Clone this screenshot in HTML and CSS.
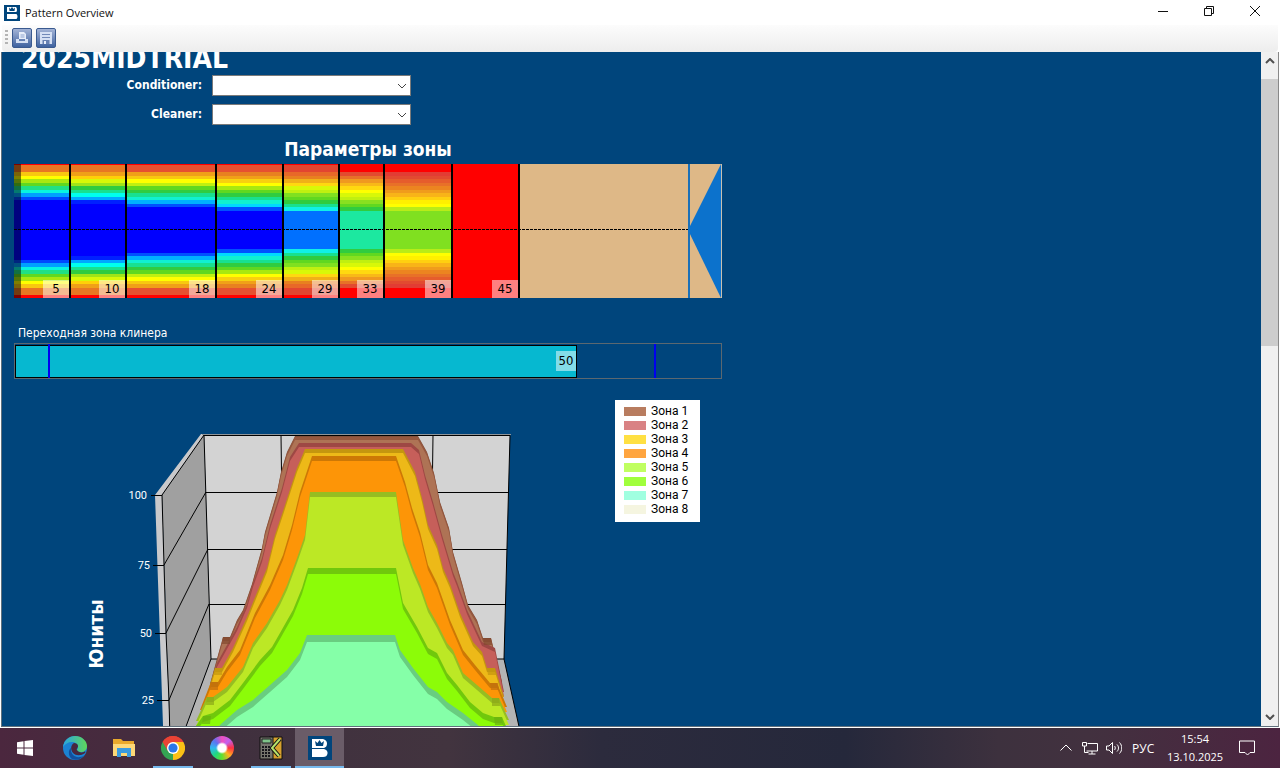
FILE: index.html
```
<!DOCTYPE html>
<html lang="ru">
<head>
    <meta charset="UTF-8">
    <title>Pattern Overview</title>
    <link rel="stylesheet" href="styles.css">
</head>
<body>
    <div class="window">
        <header class="titlebar">
            <svg class="app-icon" viewBox="0 0 16 16"><rect width="16" height="16" fill="#00457c"/><path d="M3 2h9q1 1 1 3t-1 2H3zM3 9h9.500q1 1 1 2.500t-1 2.500H3z" fill="#fff"/><path d="M5 2.500l1.500 1.500L8 2l1.500 2L11 2.500 10.500 6h-5z" fill="#00457c"/></svg>
            <span class="title">Pattern Overview</span>
            <button class="win-btn" aria-label="Minimize"><svg viewBox="0 0 12 12"><path d="M1 6.500h10"/></svg></button>
            <button class="win-btn" aria-label="Restore"><svg viewBox="0 0 12 12"><path d="M1.500 3.500h7v7h-7zM3.500 3.500v-2h7v7h-2"/></svg></button>
            <button class="win-btn" aria-label="Close"><svg viewBox="0 0 12 12"><path d="M1 1l10 10M11 1L1 11"/></svg></button>
        </header>
        <div class="toolbar">
            <span class="grip"></span>
            <button class="tool" aria-label="Print"><svg viewBox="0 0 16 16"><path d="M5 2h5l2 2v5H5z" fill="#e8eefa"/><path d="M6.500 5h4M6.500 7h4" stroke="#8fa5cf"/><path d="M2 9h3v2h6V9h3v4H2z" fill="#d5e0f4"/></svg></button>
            <button class="tool" aria-label="Save"><svg viewBox="0 0 16 16"><path d="M2 2h12v12H2z" fill="#d5e0f4"/><path d="M4 4.500h8M4 7.500h8" stroke="#7189b8"/><path d="M4.500 10h7v4h-7z" fill="#6680b2"/><path d="M6 11h2v3H6z" fill="#e8eefa"/></svg></button>
        </div>

        <div class="body">
            <main class="content">
                <h1>2025MIDTRIAL</h1>
                <form class="params">
                    <label for="conditioner">Conditioner:</label>
                    <div class="combo">
                        <select id="conditioner"><option></option></select>
                        <svg viewBox="0 0 10 6"><path d="M1 1l4 4 4-4"/></svg>
                    </div>
                    <label for="cleaner">Cleaner:</label>
                    <div class="combo">
                        <select id="cleaner"><option></option></select>
                        <svg viewBox="0 0 10 6"><path d="M1 1l4 4 4-4"/></svg>
                    </div>
                </form>

                <section class="lane-panel">
                    <h2>Параметры зоны</h2>
                    <div class="lane" id="lane">
                        <div class="lane-end">
                            <svg viewBox="0 0 34 134" preserveAspectRatio="none"><path d="M0 0h2v134H0z" fill="#1a70b8"/><path d="M0 66L33 0v134z" fill="#0c72cc"/><path d="M33 0h1v134h-1z" fill="#c8c0b0"/></svg>
                        </div>
                        <div class="foul"></div>
                        <div class="center-line"></div>
                    </div>

                    <p class="caption">Переходная зона клинера</p>
                    <div class="track">
                        <div class="track-fill"><span>50</span></div>
                        <i class="mark mark-start"></i>
                        <i class="mark mark-end"></i>
                    </div>
                </section>

                <section class="chart">
                    <svg class="plot" viewBox="14 400 540 340">
                        <!-- walls and floor -->
                        <path d="M155 495L201 434H205L162 495L170 740H163.500Z" fill="#c9c9cb"/>
                        <path d="M211 659L181 740H522L504 659Z" fill="#b4b4b4"/>
                        <path d="M162 495L204 435L211 659L181 740H170Z" fill="#a0a0a0"/>
                        <path d="M204 435H510L504 659H211Z" fill="#d3d3d3"/>
                        <path d="M202 434.500H511" stroke="#8f9498"/>
                        <g class="axis">
                            <path d="M162 495L204 435L211 659L181 740M162 495L164 565L166 633L169 700L170 740"/>
                            <path d="M164 565L206 492M166 633L208 549M169 700L209 604"/>
                            <path d="M204 435.500H510L504 659H211M206 492.500H508M208 549.500H507M209 604.500H506"/>
                            <path d="M281 435L284 659M357.500 435V659M433 435L430 659M504 659L522 740"/>
                            <path d="M151 495.500H162M153 565.500H164M155 633.500H166M157 700.500H169"/>
                        </g>
                        <!-- one ribbon per zone, back to front -->
                        <defs>
                            <path id="z1" d="M210 684L223 637H230L237 620L243 610L252 584L262 548L265 532L277 492L281 472L287 452L295 436H418L427 452L434 473L440 502L449 528L453 552L462 583L468 605L477 620L483 638H491L502 682Z"/>
                            <path id="z2" d="M212 682L217 663L227 645L237 627L247 604L253 583L262 558L270 525L282 488L290 457L299 443H411L419 450L425 475L433 502L442 535L453 572L457 582L467 610L482 642L495 648L504 692Z"/>
                            <path id="z3" d="M206 698L215 668H222L233 648L247 617L260 585L267 568L275 535L284 508L297 468L305 449H403L415 472L422 498L428 525L437 545L443 568L450 584L460 613L473 642L482 652L487 668H495L504 697Z"/>
                            <path id="z4" d="M200 710L211 682H218L227 667L240 650L255 613L270 585L283 555L292 525L300 492L312 456H396L405 482L412 508L420 532L428 565L437 583L443 600L450 620L463 650L475 665L490 683H497L507 707Z"/>
                            <path id="z5" d="M196 721L207 697H213L227 687L243 667L253 643L267 623L280 600L287 585L297 558L305 535L310 492H396L403 540L413 568L420 584L428 607L437 623L447 643L453 650L463 673L477 685L492 698H499L509 720Z"/>
                            <path id="z6" d="M186 740L203 716L213 713L230 700L243 683L260 660L272 647L280 633L293 610L302 588L308 568H396L403 603L417 627L428 648L437 653L447 673L457 685L470 702L483 713L494 717H502L512 740Z"/>
                            <path id="z7" d="M206 740L221 724L237 710L253 700L270 685L287 670L300 653L307 635H395L400 650L413 668L428 687L437 692L447 702L463 713L478 725L488 740Z"/>
                        </defs>
                        <use href="#z1" fill="#85503a"/><use href="#z1" y="1" fill="#96583f"/><use href="#z1" y="4" fill="#ae7355"/>
                        <use href="#z2" fill="#9e4844"/><use href="#z2" y="4" fill="#c65f5a"/>
                        <use href="#z3" fill="#c4960f"/><use href="#z3" y="4" fill="#edb918"/>
                        <use href="#z4" fill="#cd7805"/><use href="#z4" y="5" fill="#fd9507"/>
                        <use href="#z5" fill="#96bd22"/><use href="#z5" y="5" fill="#bce825"/>
                        <use href="#z6" fill="#70c80c"/><use href="#z6" y="6" fill="#8cfc08"/>
                        <use href="#z7" fill="#69cd80"/><use href="#z7" y="7" fill="#85ffa8"/>
                        <g class="feet">
                            <path d="M223 637h7v7h-8zM483 638h8l1 7h-8z" fill="#83492f"/>
                            <path d="M215 668h7v7h-8zM487 668h8l1 7h-8z" fill="#c4960f"/>
                            <path d="M211 682h7v8h-8zM490 683h8l1 7h-8z" fill="#c07010"/>
                            <path d="M207 697h7v8h-8zM492 698h7l1 8h-8z" fill="#8da818"/>
                            <path d="M203 716h8l-1 8h-8zM494 717h8l1 8h-8z" fill="#6ab010"/>
                        </g>
                        <g class="ticks">
                            <text x="147" y="499">100</text>
                            <text x="150" y="569">75</text>
                            <text x="152" y="637">50</text>
                            <text x="154" y="704">25</text>
                        </g>
                        <text class="axis-title" transform="translate(103 634) rotate(-90)">Юниты</text>
                    </svg>
                    <ul class="legend">
                        <li><i class="z1"></i>Зона 1</li>
                        <li><i class="z2"></i>Зона 2</li>
                        <li><i class="z3"></i>Зона 3</li>
                        <li><i class="z4"></i>Зона 4</li>
                        <li><i class="z5"></i>Зона 5</li>
                        <li><i class="z6"></i>Зона 6</li>
                        <li><i class="z7"></i>Зона 7</li>
                        <li><i class="z8"></i>Зона 8</li>
                    </ul>
                </section>
            </main>
            <div class="scrollbar">
                <svg viewBox="0 0 10 6"><path d="M1 5l4-4 4 4"/></svg>
                <div class="rail"><div class="thumb"></div></div>
                <svg viewBox="0 0 10 6"><path d="M1 1l4 4 4-4"/></svg>
            </div>
        </div>
    </div>

    <footer class="taskbar">
        <button class="task start" aria-label="Start"><svg viewBox="0 0 24 24"><path d="M4 6.200l6.500-1v6.300H4zM11.500 5L20 4v7.500h-8.500zM4 12.500h6.500v6.300L4 17.800zM11.500 12.500H20V20l-8.500-1z" fill="#fff"/></svg></button>
        <button class="task" aria-label="Edge">
            <svg viewBox="0 0 24 24">
                <defs>
                    <linearGradient id="edgeTop"><stop offset="0" stop-color="#2aa5e0"/><stop offset="1" stop-color="#5fd65a"/></linearGradient>
                </defs>
                <circle cx="12" cy="12" r="12" fill="#1b82d2"/>
                <path d="M0 11C1 4 6 0 12 0c7 0 12 5 12 10 0 4-3 6-6 6-3 0-4-1-4-2 0-1 1-1 1-3 0-3-3-5-6-5-4 0-7 2-9 5z" fill="url(#edgeTop)"/>
                <path d="M8 12c-1 6 4 10 9 9 2 0 4-1 5-3-3 5-8 7-13 5-4-3-4-9-1-11z" fill="#124f9c"/>
                <path d="M14 14c-1-1 1-2 1-4 0-2-2-3-4-3-3 2-4 6-1 10 3 3 8 3 12 0 1-1 0-2-1-1-3 1-6 0-7-2z" fill="#48273e"/>
            </svg>
        </button>
        <button class="task" aria-label="Explorer"><svg viewBox="0 0 24 24"><path d="M1 3h8l2 2h11v14H1z" fill="#e9a92c"/><path d="M1 8h22v12H1z" fill="#fdd878"/><path d="M5 12h14v9h-4v-4H9v4H5z" fill="#3a9be0"/></svg></button>
        <button class="task running" aria-label="Chrome">
            <svg viewBox="0 0 24 24">
                <path d="M12 12L1.600 6A12 12 0 0 1 22.400 6z" fill="#e94335"/>
                <path d="M12 12L22.400 6A12 12 0 0 1 12 24z" fill="#fbc116"/>
                <path d="M12 12V24A12 12 0 0 1 1.600 6z" fill="#34a353"/>
                <path d="M12 6h10.400l-5 9-5.400 9 5-9z" fill="#fbc116"/>
                <path d="M12 6h10.400A12 12 0 0 0 1.600 6l5.200 9z" fill="#e94335"/>
                <circle cx="12" cy="12" r="6" fill="#fff"/><circle cx="12" cy="12" r="4.600" fill="#2a77e8"/>
            </svg>
        </button>
        <button class="task" aria-label="Photos"><span class="ring"></span></button>
        <button class="task running" aria-label="Calculator">
            <svg viewBox="0 0 24 24">
                <path d="M10 1h13v22H10z" fill="#d8a12e" stroke="#111"/>
                <path d="M1 1h13v22H1z" fill="#76766e" stroke="#111"/>
                <path d="M3 3h9v4H3z" fill="#7fc48a" stroke="#222"/>
                <path d="M3 11h9M3 14h9M3 17h9M3 20h9" stroke="#15151a" stroke-width="2" stroke-dasharray="2 1"/>
                <path d="M21 3l-8 9 7 8" fill="none" stroke="#111" stroke-width="4"/>
                <path d="M21 3l-8 9 7 8" fill="none" stroke="#b7e36c" stroke-width="2"/>
            </svg>
        </button>
        <button class="task active" aria-label="Pattern Overview"><svg viewBox="0 0 24 24"><path d="M0 0h24v24H0z" fill="#00457c"/><path d="M4 3h11q4 1 4 4.500T16 12H4zM4 13h12q4 1 3.500 4.500T15 21H4z" fill="#fff"/><path d="M7 5l2.500 2L11.500 4l2 3L16 5l-1 5H8z" fill="#00457c"/></svg></button>

        <div class="tray">
            <svg viewBox="0 0 16 16"><path d="M2.500 10.500L8 5l5.500 5.500"/></svg>
            <svg viewBox="0 0 16 16"><path d="M5.500 3.500h10v7.500H4.500M10 11v3M6.500 14h7M.5 2.500h4v3.500h-4zM2.500 6v6.500h4"/></svg>
            <svg viewBox="0 0 16 16"><path d="M.5 6v4h2.500l3.500 3.500v-11L3 6zM8.500 6c1 1 1 3 0 4M11 4.500c2 2 2 5 0 7M13.500 2.500c3 3 3 8 0 11"/></svg>
            <span class="lang">РУС</span>
            <div class="clock"><time>15:54</time><time>13.10.2025</time></div>
            <button class="notify" aria-label="Notifications"><svg viewBox="0 0 16 16"><path d="M.5 1h15v11.500H11l-2.500 2.500L6 12.500H.5z"/></svg></button>
        </div>
    </footer>

    <script src="lane.js"></script>
</body>
</html>
```

FILE: lane.js
```
// distance from the top of the lane where each oil stripe begins
const steps = [1, 8, 12, 15, 19, 22, 26, 29, 33, 36, 40, 43, 47];
const RED = '#ff0000';

const zones = [
    { end: 5, colors: ['#e87722', '#f8c810', '#ffff00', '#a8e810', '#60d820', '#20e085', '#08f4e0', '#00a0ff', '#0048ff', '#0000ff'] },
    { end: 10, colors: ['#e87722', '#f0a018', '#ffd008', '#d8f808', '#a0e418', '#30cc40', '#18e090', '#00ffee', '#00a8ff', '#0020ff', '#0000ff'] },
    { end: 18, colors: ['#e65030', '#f0a018', '#f8c810', '#ffff00', '#c0f010', '#60d820', '#30cc40', '#18e090', '#10f0d0', '#00b0ff', '#0050ff', '#0000ff'] },
    { end: 24, colors: ['#e65030', '#e88020', '#f0a018', '#f8d010', '#ffff00', '#a8e810', '#60d820', '#30cc40', '#18e090', '#10f0d0', '#00d8ff', '#0050ff', '#0000ff'] },
    { end: 29, colors: ['#e24530', '#e86828', '#e88020', '#f0b018', '#ffd810', '#d8f808', '#c0f010', '#80e020', '#60d820', '#30cc40', '#18e090', '#10f0e8', '#0070ff'] },
    { end: 33, colors: [RED, '#e24a30', '#e87028', '#f09820', '#f8b818', '#ffd810', '#ffff00', '#d8f808', '#c0f010', '#88e020', '#60d820', '#30cc40', '#1ce8a0'] },
    { end: 39, colors: [RED, '#e23c34', '#e24a30', '#e65c2c', '#e87028', '#ec8420', '#f09c1c', '#f8b418', '#ffd010', '#fff000', '#ffff00', '#b8ec18', '#80e020'] },
    { end: 45, colors: [RED] }
];

function stripes(colors) {
    const stops = [`${RED} 0 1px`];
    const last = colors.length - 1;
    for (let i = 0; i < last; i++) {
        stops.push(`${colors[i]} ${steps[i]}px ${steps[i + 1]}px`);
    }
    stops.push(`${colors[last]} ${steps[last]}px ${132 - steps[last]}px`);
    for (let i = last - 1; i >= 0; i--) {
        stops.push(`${colors[i]} ${132 - steps[i + 1]}px ${132 - steps[i]}px`);
    }
    stops.push(`${RED} 131px`);
    return `linear-gradient(${stops.join(', ')})`;
}

const lane = document.getElementById('lane');
const laneEnd = lane.querySelector('.lane-end');
zones.forEach(zone => {
    const div = document.createElement('div');
    div.className = 'zone';
    div.style.background = stripes(zone.colors);
    const label = document.createElement('span');
    label.textContent = zone.end;
    div.appendChild(label);
    lane.insertBefore(div, laneEnd);
});
```

FILE: styles.css
```
* { box-sizing: border-box; }
body { margin: 0; height: 100vh; display: flex; flex-direction: column; overflow: hidden; background: #fff; font-family: "DejaVu Sans Condensed", "DejaVu Sans", sans-serif; font-size: 12px; }
button { border: none; padding: 0; background: none; }
h1, h2, p, ul { margin: 0; padding: 0; }

.window { flex: 1; min-height: 0; display: flex; flex-direction: column; border-bottom: 1px solid #fff; }
.titlebar { display: flex; align-items: center; height: 25px; padding: 0 2px 0 4px; font-family: "Open Sans", sans-serif; font-size: 11px; }
.app-icon { width: 16px; height: 16px; }
.title { flex: 1; padding-left: 5px; color: #111; }
.win-btn { width: 46px; height: 24px; }
.win-btn svg { width: 12px; height: 12px; fill: none; stroke: #111; }
.toolbar { display: flex; align-items: center; height: 27px; padding: 0 2px 2px 3px; margin: 0 2px; gap: 4px; background: linear-gradient(#fcfcfc, #ededed); border-radius: 0 0 4px 4px; }
.grip { width: 3px; height: 15px; background: repeating-linear-gradient(#b4b4b4 0 2px, transparent 2px 4px); }
.tool { width: 20px; height: 20px; border: 1px solid #3a5a90; border-radius: 2px; background: linear-gradient(#a3b3d6, #3f62a0); }
.tool svg { display: block; width: 16px; height: 16px; margin: 1px; }

.body { flex: 1; min-height: 0; display: flex; margin: 0 1px; border-left: 1px solid #60707c; border-right: 1px solid #888; border-bottom: 1px solid #60707c; background: #00457c; }
.content { flex: 1; min-width: 0; overflow: hidden; padding-left: 12px; color: #fff; }
h1 { margin-top: -8px; padding-left: 7px; font-size: 28px; line-height: 30px; }
.params { display: grid; grid-template-columns: 188px 199px; gap: 7px 10px; align-items: center; font-weight: bold; font-size: 12px; line-height: 21px; }
.params label { padding-top: 1px; text-align: right; }
.combo { position: relative; height: 21px; }
.combo select { appearance: none; display: block; width: 100%; height: 21px; border: 1px solid #7a7a7a; border-radius: 0; background: #fff; }
.combo svg { position: absolute; right: 4px; top: 8px; width: 10px; height: 6px; fill: none; stroke: #444; pointer-events: none; }

.lane-panel { max-width: 708px; }
h2 { margin-top: 12px; font-size: 19px; line-height: 24px; text-align: center; }
.lane { position: relative; display: grid; grid-template-columns: 57fr 56fr 90fr 67fr 56fr 45fr 68fr 67fr 202fr; height: 134px; margin-top: 3px; background: #deb887; }
.zone { display: flex; justify-content: flex-end; align-items: flex-end; border-right: 2px solid #000; }
.zone span { width: 26px; height: 18px; background: rgba(255, 255, 255, 0.5); color: #000; text-align: center; font-size: 13px; line-height: 18px; white-space: nowrap; }
.lane-end { display: flex; justify-content: flex-end; }
.lane-end svg { width: 34px; height: 134px; }
.foul { position: absolute; left: 0; top: 0; width: 7px; height: 100%; background: rgba(0, 0, 0, 0.5); }
.center-line { position: absolute; left: 0; right: 34px; top: 65px; height: 1px; background: repeating-linear-gradient(90deg, #000 0 3px, transparent 3px 4px); }

.caption { margin-top: 26px; padding-left: 4px; font-size: 12px; line-height: 18px; }
.track { position: relative; height: 36px; margin-top: 1px; border: 1px solid #5c6870; }
.track-fill { display: flex; justify-content: flex-end; align-items: flex-start; width: 79.6%; height: 33px; margin-top: 1px; padding-top: 5px; border: 1px solid #000; background: #06b8d0; }
.track-fill span { width: 20px; background: #83dce8; color: #000; text-align: center; font-size: 13px; line-height: 20px; }
.mark { position: absolute; top: 0; bottom: 0; width: 2px; background: #0000f0; }
.mark-start { left: 33px; }
.mark-end { right: 65px; }

.chart { display: flex; align-items: flex-start; gap: 61px; margin-top: 21px; }
.plot { flex: none; width: 540px; height: 340px; }
.axis { fill: none; stroke: #000; stroke-width: 1; }
.feet { opacity: 0.7; }
.ticks { fill: #fff; font-family: Roboto, sans-serif; font-size: 11px; text-anchor: end; }
.axis-title { fill: #fff; font-size: 19px; font-weight: bold; text-anchor: middle; }
.legend { width: 85px; height: 122px; padding: 4px 9px; background: #fff; color: #000; list-style: none; }
.legend li { display: flex; align-items: center; gap: 5px; line-height: 14px; font-family: Roboto, sans-serif; font-size: 12px; white-space: nowrap; }
.legend i { width: 22px; height: 9px; }
.z1 { background: #b87c5f; }
.z2 { background: #d98284; }
.z3 { background: #ffe042; }
.z4 { background: #ffa53f; }
.z5 { background: #c0ff60; }
.z6 { background: #a0ff3c; }
.z7 { background: #a0ffe0; }
.z8 { background: #f5f5e0; }

.scrollbar { width: 17px; display: flex; flex-direction: column; align-items: center; gap: 15px; padding: 6px 0; background: #f0f0f0; }
.scrollbar svg { width: 10px; height: 6px; fill: none; stroke: #505050; stroke-width: 2; }
.rail { flex: 1; align-self: stretch; }
.thumb { height: 43%; background: #cdcdcd; }

.taskbar { display: flex; height: 40px; background: linear-gradient(90deg, #4b273e 0, #40303e 18%, #42343f 35%, #2c2b3d 47%, #25283b 66%, #3d313e 78%, #42313f 85%, #4c2440 100%); color: #fff; font-family: "Open Sans", sans-serif; font-size: 11px; }
.task { width: 49px; height: 40px; display: flex; align-items: center; justify-content: center; border-bottom: 2px solid transparent; padding-top: 2px; }
.task svg { width: 24px; height: 24px; }
.start { margin-right: 1px; }
.running { background: linear-gradient(#76b9ed, #76b9ed) center bottom / 40px 2px no-repeat border-box; }
.active { background: #6a5c68; border-bottom-color: #76b9ed; }
.ring { width: 24px; height: 24px; border-radius: 50%; background: radial-gradient(#fff 0 4px, transparent 6px), conic-gradient(#f050c0, #c060f0, #ff3040, #ffb020, #60e030, #20d880, #30b8f0, #6070f0, #f050c0); }
.tray { flex: 1; display: flex; justify-content: flex-end; align-items: center; padding-right: 25px; }
.tray svg { width: 16px; height: 16px; margin-right: 8px; fill: none; stroke: #fff; }
.lang { width: 24px; margin-left: 2px; font-size: 12px; }
.clock { display: flex; flex-direction: column; align-items: center; width: 56px; margin: 0 16px 0 11px; line-height: 18px; white-space: nowrap; }
.notify svg { display: block; margin: 0; }
```
